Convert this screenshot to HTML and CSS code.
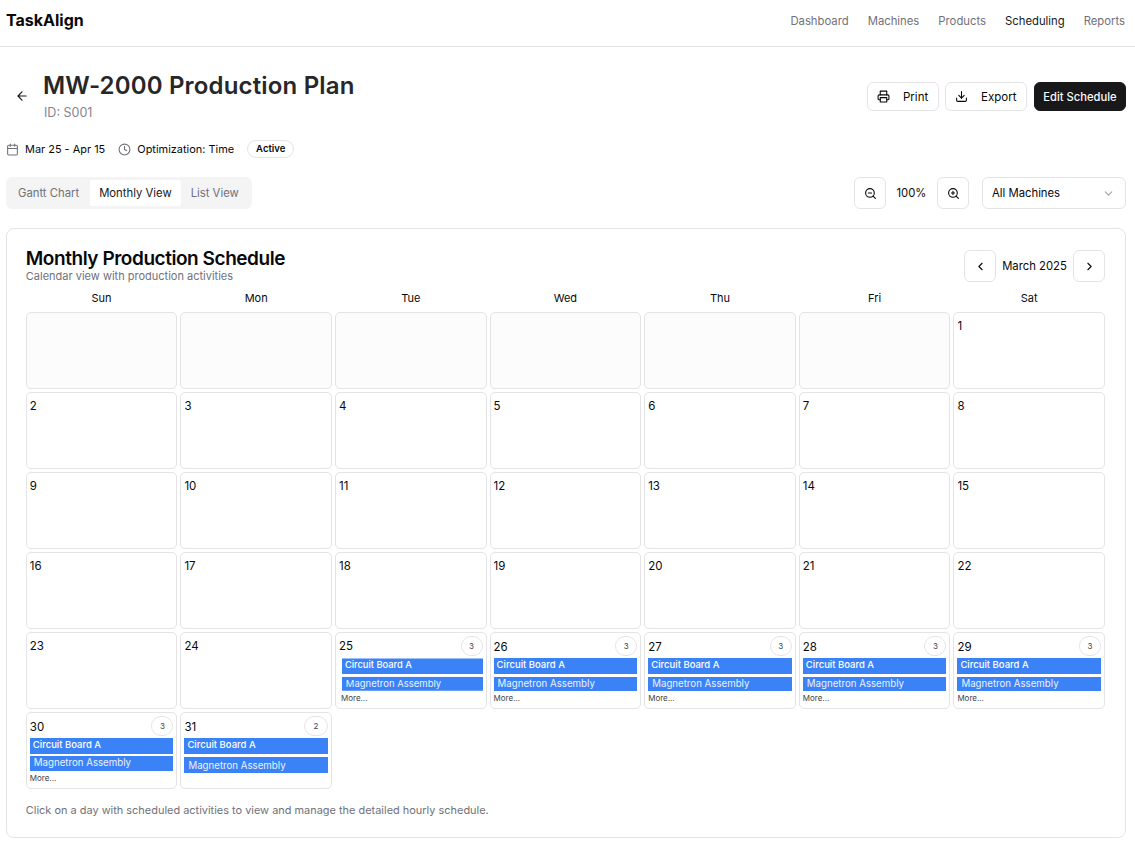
FILE: index.html
```html
<!DOCTYPE html>
<html lang="en">
<head>
  <meta charset="UTF-8" />
  <meta name="viewport" content="width=device-width, initial-scale=1.0" />
  <title>TaskAlign</title>
  <link rel="stylesheet" href="styles.css">
</head>
<body>
  <header class="topbar">
    <div class="logo">TaskAlign</div>
    <nav class="nav">
      <a>Dashboard</a>
      <a>Machines</a>
      <a>Products</a>
      <a class="current">Scheduling</a>
      <a>Reports</a>
    </nav>
  </header>

  <main class="page">
    <div class="title-row">
      <div class="title-left">
        <svg class="back" viewBox="0 0 24 24"><path d="M19 12H5M12 19l-7-7 7-7"/></svg>
        <div>
          <h1>MW-2000 Production Plan</h1>
          <div class="plan-id">ID: S001</div>
        </div>
      </div>
      <div class="actions">
        <button class="btn print">
          <svg viewBox="0 0 24 24"><path d="M6 9V2h12v7"/><path d="M6 18H4a2 2 0 0 1-2-2v-5a2 2 0 0 1 2-2h16a2 2 0 0 1 2 2v5a2 2 0 0 1-2 2h-2"/><path d="M6 14h12v8H6z"/></svg>
          Print
        </button>
        <button class="btn export">
          <svg viewBox="0 0 24 24"><path d="M21 15v4a2 2 0 0 1-2 2H5a2 2 0 0 1-2-2v-4"/><path d="M7 10l5 5 5-5"/><path d="M12 15V3"/></svg>
          Export
        </button>
        <button class="btn dark">Edit Schedule</button>
      </div>
    </div>

    <div class="meta">
      <span class="meta-item">
        <svg viewBox="0 0 24 24"><rect x="3" y="4" width="18" height="18" rx="2"/><path d="M16 2v4M8 2v4M3 10h18"/></svg>
        Mar 25 - Apr 15
      </span>
      <span class="meta-item">
        <svg viewBox="0 0 24 24"><circle cx="12" cy="12" r="10"/><path d="M12 6v6l4 2"/></svg>
        Optimization: Time
      </span>
      <span class="status">Active</span>
    </div>

    <div class="toolbar">
      <div class="tabs">
        <span class="tab gantt">Gantt Chart</span>
        <span class="tab selected">Monthly View</span>
        <span class="tab">List View</span>
      </div>
      <div class="controls">
        <button class="icon-btn"><svg viewBox="0 0 24 24"><circle cx="11" cy="11" r="8"/><path d="M21 21l-4.3-4.3M8 11h6"/></svg></button>
        <span class="zoom-value">100%</span>
        <button class="icon-btn"><svg viewBox="0 0 24 24"><circle cx="11" cy="11" r="8"/><path d="M21 21l-4.3-4.3M11 8v6M8 11h6"/></svg></button>
        <div class="select">
          All Machines
          <svg viewBox="0 0 24 24"><path d="M6 9l6 6 6-6"/></svg>
        </div>
      </div>
    </div>

    <section class="card">
      <div class="card-head">
        <div>
          <h2>Monthly Production Schedule</h2>
          <p class="sub">Calendar view with production activities</p>
        </div>
        <div class="month-nav">
          <button class="icon-btn"><svg viewBox="0 0 24 24"><path d="M15 18l-6-6 6-6"/></svg></button>
          <span>March 2025</span>
          <button class="icon-btn"><svg viewBox="0 0 24 24"><path d="M9 18l6-6-6-6"/></svg></button>
        </div>
      </div>

      <div class="weekdays">
        <span>Sun</span><span>Mon</span><span>Tue</span><span>Wed</span><span>Thu</span><span>Fri</span><span>Sat</span>
      </div>

      <div class="calendar">
        <div class="day empty"></div>
        <div class="day empty"></div>
        <div class="day empty"></div>
        <div class="day empty"></div>
        <div class="day empty"></div>
        <div class="day empty"></div>
        <div class="day"><span class="num">1</span></div>
        <div class="day"><span class="num">2</span></div>
        <div class="day"><span class="num">3</span></div>
        <div class="day"><span class="num">4</span></div>
        <div class="day"><span class="num">5</span></div>
        <div class="day"><span class="num">6</span></div>
        <div class="day"><span class="num">7</span></div>
        <div class="day"><span class="num">8</span></div>
        <div class="day"><span class="num">9</span></div>
        <div class="day"><span class="num">10</span></div>
        <div class="day"><span class="num">11</span></div>
        <div class="day"><span class="num">12</span></div>
        <div class="day"><span class="num">13</span></div>
        <div class="day"><span class="num">14</span></div>
        <div class="day"><span class="num">15</span></div>
        <div class="day"><span class="num">16</span></div>
        <div class="day"><span class="num">17</span></div>
        <div class="day"><span class="num">18</span></div>
        <div class="day"><span class="num">19</span></div>
        <div class="day"><span class="num">20</span></div>
        <div class="day"><span class="num">21</span></div>
        <div class="day"><span class="num">22</span></div>
        <div class="day"><span class="num">23</span></div>
        <div class="day"><span class="num">24</span></div>
        <div class="day busy first">
          <div class="day-head"><span class="num">25</span><span class="count">3</span></div>
          <div class="bars">
            <div class="bar">Circuit Board A</div>
            <div class="bar second">Magnetron Assembly</div>
          </div>
          <div class="more">More...</div>
        </div>
        <div class="day busy">
          <div class="day-head"><span class="num">26</span><span class="count">3</span></div>
          <div class="bars">
            <div class="bar">Circuit Board A</div>
            <div class="bar second">Magnetron Assembly</div>
          </div>
          <div class="more">More...</div>
        </div>
        <div class="day busy">
          <div class="day-head"><span class="num">27</span><span class="count">3</span></div>
          <div class="bars">
            <div class="bar">Circuit Board A</div>
            <div class="bar second">Magnetron Assembly</div>
          </div>
          <div class="more">More...</div>
        </div>
        <div class="day busy">
          <div class="day-head"><span class="num">28</span><span class="count">3</span></div>
          <div class="bars">
            <div class="bar">Circuit Board A</div>
            <div class="bar second">Magnetron Assembly</div>
          </div>
          <div class="more">More...</div>
        </div>
        <div class="day busy">
          <div class="day-head"><span class="num">29</span><span class="count">3</span></div>
          <div class="bars">
            <div class="bar">Circuit Board A</div>
            <div class="bar second">Magnetron Assembly</div>
          </div>
          <div class="more">More...</div>
        </div>
        <div class="day busy">
          <div class="day-head"><span class="num">30</span><span class="count">3</span></div>
          <div class="bars tight">
            <div class="bar">Circuit Board A</div>
            <div class="bar second">Magnetron Assembly</div>
          </div>
          <div class="more">More...</div>
        </div>
        <div class="day busy">
          <div class="day-head"><span class="num">31</span><span class="count wide">2</span></div>
          <div class="bars loose">
            <div class="bar">Circuit Board A</div>
            <div class="bar second">Magnetron Assembly</div>
          </div>
        </div>
      </div>

      <p class="hint">Click on a day with scheduled activities to view and manage the detailed hourly schedule.</p>
    </section>
  </main>
</body>
</html>
```

FILE: styles.css
```css
* {
  box-sizing: border-box;
}
body {
  margin: 0;
  font-family: Inter, "Liberation Sans", sans-serif;
  color: #09090b;
  background-color: #fff;
  font-size: 12px;
}
svg {
  fill: none;
  stroke: currentColor;
  stroke-width: 2;
  stroke-linecap: round;
  stroke-linejoin: round;
}
button {
  font: inherit;
  color: inherit;
  background: #fff;
  cursor: pointer;
}

/* top bar */
.topbar {
  height: 47px;
  padding: 0 10px 4px 6px;
  display: flex;
  align-items: center;
  justify-content: space-between;
  border-bottom: 1px solid #e4e4e7;
}
.logo {
  font-size: 16px;
  font-weight: 700;
  margin-top: -2px;
}
.nav {
  display: flex;
  gap: 19px;
  font-size: 11.3px;
  color: #71717a;
}
.nav .current {
  color: #18181b;
}

/* page */
.page {
  padding: 0 9px 0 6px;
}
.title-row {
  display: flex;
  justify-content: space-between;
  align-items: center;
  padding-top: 23px;
  height: 77px;
}
.title-left {
  display: flex;
  align-items: center;
  gap: 14px;
  margin-top: -2px;
}
.back {
  width: 14px;
  height: 14px;
  margin-left: 9px;
  margin-top: -1px;
  flex: none;
  color: #18181b;
}
h1 {
  margin: 0;
  font-size: 24px;
  line-height: 28px;
  font-weight: 600;
  letter-spacing: .17px;
  color: #27272a;
}
.plan-id {
  margin-top: 5px;
  margin-left: 1px;
  font-size: 12.5px;
  line-height: 16px;
  color: #85858e;
}
.actions {
  display: flex;
  gap: 6px;
  margin-top: -1px;
}
.btn {
  height: 29px;
  border: 1px solid #e4e4e7;
  border-radius: 6px;
  display: flex;
  align-items: center;
  font-size: 11.5px;
  padding: 0 9px;
}
.btn svg {
  width: 13px;
  height: 13px;
}
.print {
  width: 72px;
  gap: 13px;
}
.export {
  width: 82px;
  gap: 13px;
}
.dark {
  width: 92px;
  margin-left: 1px;
  background-color: #18181b;
  border-color: #18181b;
  color: #fafafa;
  font-size: 11.2px;
  font-weight: 500;
  justify-content: center;
  padding: 0;
}

.meta {
  display: flex;
  align-items: center;
  margin-top: 16px;
  height: 18px;
  font-size: 10.95px;
}
.meta-item {
  display: flex;
  align-items: center;
  gap: 6px;
  margin-right: 13px;
}
.meta-item svg {
  width: 13px;
  height: 13px;
  color: #71717a;
}
.status {
  border: 1px solid #e4e4e7;
  border-radius: 9px;
  height: 18px;
  line-height: 16px;
  padding: 0 8px;
  font-size: 9.5px;
  font-weight: 600;
}

.toolbar {
  display: flex;
  justify-content: space-between;
  align-items: center;
  margin-top: 19px;
}
.tabs {
  display: flex;
  align-items: center;
  gap: 1px;
  background-color: #f4f4f5;
  border-radius: 6px;
  height: 32px;
  padding: 3px;
  width: 246px;
  font-size: 11.3px;
  color: #71717a;
}
.tab {
  padding: 0 9px;
  height: 26px;
  line-height: 26px;
}
.tab.gantt {
  padding-right: 10px;
}
.tab.selected {
  background-color: #fff;
  color: #18181b;
  border-radius: 2px;
}
.controls {
  display: flex;
  align-items: center;
}
.icon-btn {
  width: 32px;
  height: 32px;
  padding: 0;
  border: 1px solid #e4e4e7;
  border-radius: 6px;
  display: flex;
  align-items: center;
  justify-content: center;
}
.icon-btn svg {
  width: 13px;
  height: 13px;
}
.zoom-value {
  width: 51px;
  text-align: center;
  font-size: 11.3px;
}
.select {
  margin-left: 13px;
  width: 144px;
  height: 32px;
  border: 1px solid #e4e4e7;
  border-radius: 6px;
  display: flex;
  align-items: center;
  justify-content: space-between;
  padding: 0 10px 0 9px;
  font-size: 11.3px;
}
.select svg {
  width: 13px;
  height: 13px;
  color: #a1a1aa;
}

/* calendar card */
.card {
  margin-top: 19px;
  height: 610px;
  border: 1px solid #e4e4e7;
  border-radius: 8px;
  padding: 19px 20px 0 18.8px;
}
.card-head {
  display: flex;
  justify-content: space-between;
  align-items: flex-start;
}
h2 {
  margin: 0;
  font-size: 19px;
  line-height: 22px;
  font-weight: 600;
  letter-spacing: -.45px;
}
.sub {
  margin: 0;
  font-size: 11px;
  line-height: 13px;
  color: #71717a;
}
.month-nav {
  display: flex;
  align-items: center;
  margin-top: 2px;
  font-size: 11.3px;
}
.month-nav span {
  width: 77px;
  text-align: center;
}
.weekdays {
  display: grid;
  grid-template-columns: repeat(7, 1fr);
  gap: 3px;
  margin-top: 8px;
  height: 21px;
  text-align: center;
  font-size: 11px;
  line-height: 15px;
}
.calendar {
  display: grid;
  grid-template-columns: repeat(7, 1fr);
  grid-auto-rows: 77px;
  gap: 3px;
}
.day {
  border: 1px solid #e4e4e7;
  border-radius: 5px;
  padding: 4px 3px 3px;
  overflow: hidden;
}
.day.empty {
  background-color: #fcfcfc;
}
.num {
  font-size: 11.5px;
  line-height: 18px;
}
.day.busy {
  padding-top: 3px;
}
.day-head {
  display: flex;
  justify-content: space-between;
  align-items: center;
  height: 20px;
}
.day-head .num {
  padding-top: 2px;
}
.first .day-head .num {
  padding-top: 0;
}
.count {
  width: 22px;
  height: 20px;
  line-height: 18px;
  border: 1px solid #e4e4e7;
  border-radius: 10px;
  text-align: center;
  font-size: 8px;
  color: #3f3f46;
}
.count.wide {
  width: 24px;
}
.bars {
  margin-top: 2px;
  height: 33px;
  overflow: hidden;
}
.bar {
  background-color: #3b82f6;
  color: #fff;
  height: 16px;
  line-height: 14px;
  padding-left: 3px;
  font-size: 9.5px;
  font-weight: 500;
  margin-bottom: 3px;
}
.bar.second {
  padding-left: 4px;
  font-size: 9.7px;
  font-weight: 400;
  line-height: 14px;
  color: #eaf2ff;
}
.bars.tight .bar {
  margin-bottom: 2px;
}
.bars.tight .bar.second {
  line-height: 13px;
}
.bars.loose {
  height: 35px;
}
.bars.loose .bar.second {
  line-height: 18px;
}
.first .bars {
  transform: translateX(1.5px) scale(.98);
}
.first .more {
  padding-left: 2px;
}
.more {
  font-size: 8px;
  line-height: 11px;
  color: #3f3f46;
  margin-top: 2px;
}
.hint {
  margin: 14px 0 0;
  font-size: 10.95px;
  line-height: 14px;
  color: #71717a;
}
```
